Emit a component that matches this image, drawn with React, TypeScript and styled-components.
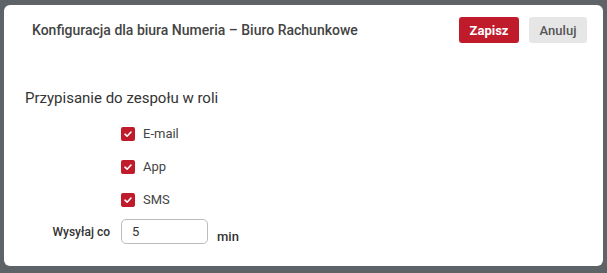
import { createGlobalStyle, styled } from 'styled-components';

const GlobalStyle = createGlobalStyle`
	html, body {
		margin: 0;
		padding: 0;
		background: #5e6368;
		font-family: Roboto, "Liberation Sans", sans-serif;
	}
`;

const Dialog = styled.div`
	box-sizing: border-box;
	width: 599px;
	height: 261px;
	margin: 5px 0 0 4px;
	background: #ffffff;
	border-radius: 6px;
	display: flex;
	flex-direction: column;
`;

const Header = styled.header`
	display: flex;
	align-items: center;
	padding: 12px 16px 0 28px;
	height: 26px;
	gap: 10px;
`;

const Title = styled.h1`
	flex: 1;
	margin: 0;
	font-size: 14px;
	font-weight: 500;
	color: #444444;
	line-height: 26px;
`;

const Button = styled.button<{ $primary?: boolean }>`
	height: 26px;
	padding: 0;
	border: none;
	border-radius: 3px;
	font-family: inherit;
	font-size: 13px;
	font-weight: ${(p) => (p.$primary ? 700 : 500)};
	background: ${(p) => (p.$primary ? '#bf1b2b' : '#e6e6e6')};
	color: ${(p) => (p.$primary ? '#ffffff' : '#555555')};
	width: ${(p) => (p.$primary ? '60px' : '58px')};
	cursor: pointer;
`;

const Body = styled.section`
	padding: 45px 0 0 21px;
	display: flex;
	flex-direction: column;
`;

const Heading = styled.h2`
	margin: 0 0 9px;
	font-size: 15px;
	font-weight: 400;
	line-height: 20px;
	color: #333333;
`;

const CheckRow = styled.label`
	display: flex;
	align-items: center;
	height: 33px;
	margin-left: 96px;
	gap: 8px;
	font-size: 13px;
	color: #444444;
`;

const Box = styled.span`
	width: 14px;
	height: 14px;
	border-radius: 2px;
	background: #bf1b2b;
	display: flex;
	align-items: center;
	justify-content: center;
`;

const FieldRow = styled.div`
	display: flex;
	align-items: center;
	margin-top: 3px;
	gap: 11px;
`;

const FieldLabel = styled.span`
	width: 85px;
	text-align: right;
	font-size: 12px;
	font-weight: 500;
	color: #333333;
`;

const Input = styled.input`
	box-sizing: border-box;
	width: 87px;
	height: 25px;
	border: 1px solid #bcbcbc;
	border-radius: 5px;
	padding: 0 10px;
	font-family: inherit;
	font-size: 13px;
	color: #333333;
	outline: none;
`;

const Unit = styled.span`
	align-self: flex-end;
	margin-left: -2px;
	margin-bottom: -1px;
	font-size: 13px;
	font-weight: 500;
	color: #333333;
	line-height: 16px;
`;

const Check = () => (
	<Box>
		<svg width="10" height="10" viewBox="0 0 10 10">
			<path d="M2 5.2 L4.1 7.2 L8 3" fill="none" stroke="#fff" strokeWidth="1.6" strokeLinecap="round" strokeLinejoin="round" />
		</svg>
	</Box>
);

export default function App() {
	return (
		<>
			<GlobalStyle />
			<Dialog>
				<Header>
					<Title>Konfiguracja dla biura Numeria – Biuro Rachunkowe</Title>
					<Button $primary>Zapisz</Button>
					<Button>Anuluj</Button>
				</Header>
				<Body>
					<Heading>Przypisanie do zespołu w roli</Heading>
					{['E-mail', 'App', 'SMS'].map((c) => (
						<CheckRow key={c}>
							<Check />
							{c}
						</CheckRow>
					))}
					<FieldRow>
						<FieldLabel>Wysyłaj co</FieldLabel>
						<Input defaultValue="5" />
						<Unit>min</Unit>
					</FieldRow>
				</Body>
			</Dialog>
		</>
	);
}
